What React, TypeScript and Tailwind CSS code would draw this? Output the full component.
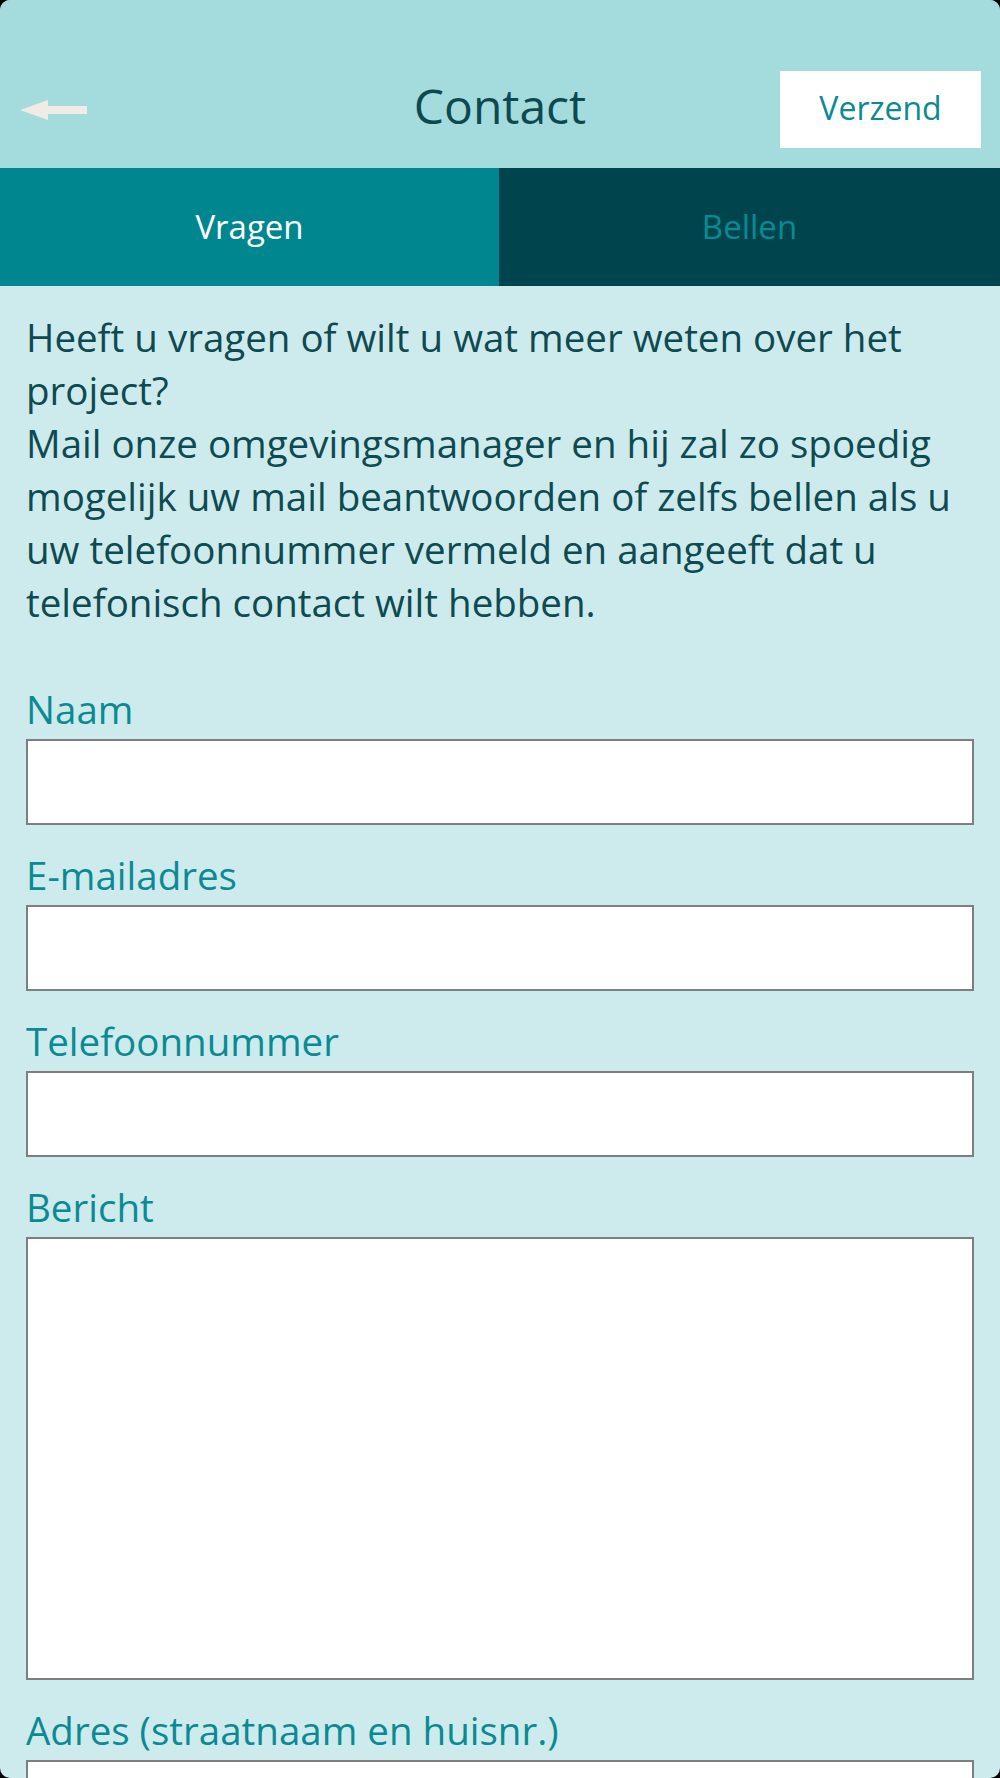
import React from "react";

function Field({ label, tall = false }: { label: string; tall?: boolean }) {
  return (
    <div className="mb-[24px] flex flex-col">
      <label className="mb-[3px] text-[38.5px] leading-[53px] text-[#0b8a93]">{label}</label>
      {tall ? (
        <textarea className="h-[443px] w-full resize-none border-2 border-[#7e7e7e] bg-white outline-none" />
      ) : (
        <input className="h-[86px] w-full border-2 border-[#7e7e7e] bg-white outline-none" />
      )}
    </div>
  );
}

export default function App() {
  return (
    <div className="h-[1778px] w-[1000px] overflow-hidden bg-black font-['Open_Sans',sans-serif]">
      <div className="flex h-full flex-col overflow-hidden rounded-[10px] bg-[#cdebed]">
        <header className="grid h-[168px] shrink-0 grid-cols-[1fr_auto_1fr] items-center bg-[#a4dbdc] pt-[51px]">
          <div className="pl-[20px]">
            <svg width="67" height="20" viewBox="0 0 67 20" aria-label="Terug">
              <polygon points="0,10 28,0 28,6 67,6 67,14 28,14 28,20" fill="#efebe6" />
            </svg>
          </div>
          <h1 className="mb-[8px] text-[48px] leading-[48px] font-medium text-[#0d4a50]">Contact</h1>
          <div className="flex justify-end pr-[19px]">
            <button className="flex h-[77px] w-[201px] items-center justify-center bg-white pb-[4px] text-[32px] text-[#0b8a93]">
              Verzend
            </button>
          </div>
        </header>

        <nav className="grid h-[118px] shrink-0 grid-cols-[499px_1fr]">
          <div className="flex items-center justify-center bg-[#00868f] text-[33px] text-white">Vragen</div>
          <div className="flex items-center justify-center bg-[#00454e] text-[33px] text-[#0a8a93]">Bellen</div>
        </nav>

        <main className="flex flex-col px-[26px] pt-[25px]">
          <p className="mb-[54px] text-[38.5px] leading-[53px] text-[#0e4a50]">
            Heeft u vragen of wilt u wat meer weten over het
            <br />
            project?
            <br />
            Mail onze omgevingsmanager en hij zal zo spoedig
            <br />
            mogelijk uw mail beantwoorden of zelfs bellen als u
            <br />
            uw telefoonnummer vermeld en aangeeft dat u
            <br />
            telefonisch contact wilt hebben.
          </p>
          <Field label="Naam" />
          <Field label="E-mailadres" />
          <Field label="Telefoonnummer" />
          <Field label="Bericht" tall />
          <Field label="Adres (straatnaam en huisnr.)" />
        </main>
      </div>
    </div>
  );
}
